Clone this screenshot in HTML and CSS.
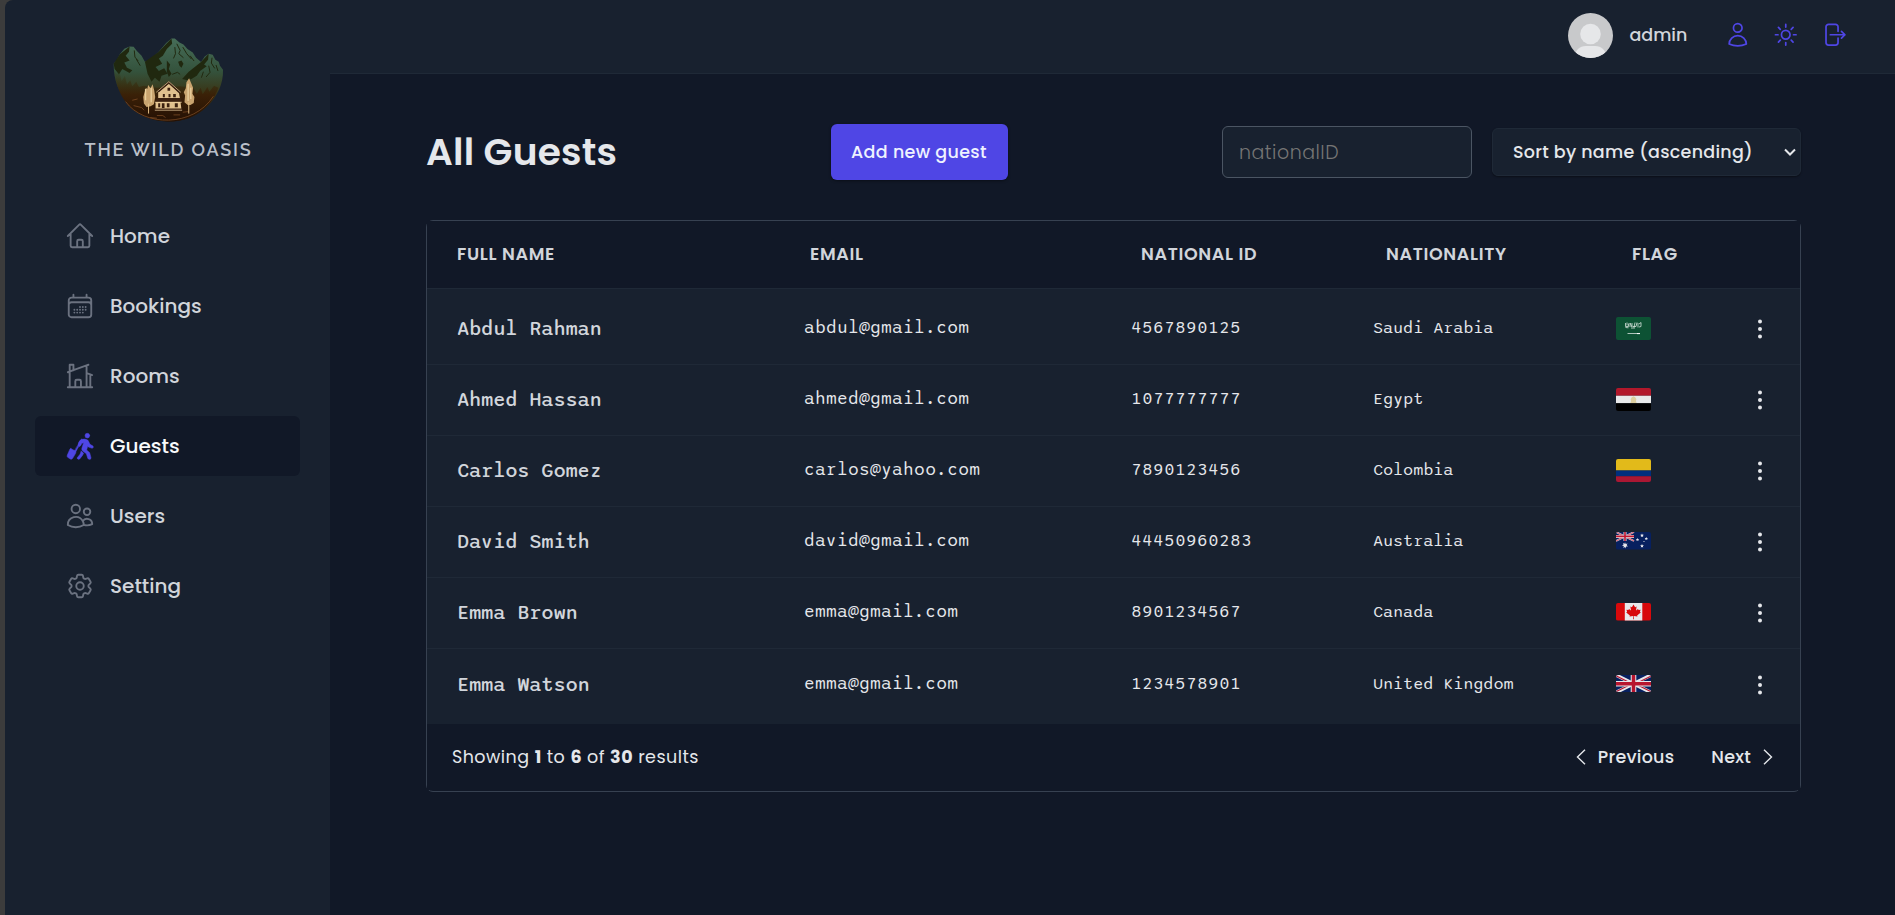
FILE: index.html
```html
<!DOCTYPE html>
<html lang="en">
<head>
<meta charset="utf-8">
<title>The Wild Oasis</title>
<link rel="stylesheet" href="styles.css">
</head>
<body>
<div class="app">
  <aside class="sidebar">
    <div class="brand">
      <svg class="brand-art" viewBox="338 110 334 258">
        <defs>
          <linearGradient id="hill" x1="0" y1="0" x2="0" y2="1"><stop offset="0" stop-color="#466d58"/><stop offset=".4" stop-color="#34523c"/><stop offset=".68" stop-color="#3a3212"/><stop offset="1" stop-color="#2a1606"/></linearGradient>
          <linearGradient id="ground" x1="0" y1="0" x2="0" y2="1"><stop offset="0" stop-color="#33360f" stop-opacity="0"/><stop offset=".5" stop-color="#3a1e06" stop-opacity=".9"/><stop offset="1" stop-color="#241104"/></linearGradient>
        </defs>
        <path fill="url(#hill)" d="M340 190 350 178 358 162 372 145 388 138 400 139 410 152 424 166 434 184 450 178 475 155 498 128 514 114 524 114 538 126 550 132 562 146 578 156 588 172 603 185 614 168 626 160 638 163 646 178 656 184 660 196 669 208C671 250 650 290 625 315C590 350 550 364 503 364C455 362 412 345 383 308C355 278 340 240 340 190Z"/>
        <path fill="#20280f" d="M340 190 358 162 388 138 386 154 376 166 388 180 372 186 380 202 396 210 388 218 366 206 356 222 343 206ZM434 184 475 155 514 114 516 130 500 146 488 166 476 174 486 190 466 200 476 212 492 204 502 220 484 226 478 244 464 232 454 244 442 220ZM603 185 626 160 624 178 612 192 620 198 600 212 590 226 574 236 562 240 546 236 566 214ZM534 184 544 180 550 190 544 202 538 196ZM500 180 510 192 506 206 514 220 506 230 500 214Z"/>
        <path fill="none" stroke="#20280f" stroke-width="3" d="M530 130 540 150 536 160 550 172M548 140 560 160 574 176M524 140 526 160 520 174M636 172 634 188 644 204M626 196 630 216 618 230M648 194 654 212M402 150 404 170 414 182M408 176 420 196M610 214 604 232M516 222 532 216 540 222M570 166 582 182"/>
        <path fill="url(#ground)" d="M341 205 350 222 356 208 364 242 374 226 380 252 390 240 396 258 408 244 416 260 430 256 470 262 540 258 580 262 590 280 602 262 608 282 622 260 628 274 642 256 655 262C642 300 600 364 503 364C400 358 350 300 341 205Z"/>
        <path fill="none" stroke="#8a552b" stroke-width="2" d="M376 304C430 380 580 382 640 288M396 300l16-4M400 316l24 6 8 8M470 346h18l8 6M520 344h20M548 336l18-2M450 352l20 2"/>
        <path fill="#c9a46f" d="M444 254l7 10 6-12 5 18 3 20-4 22-10 6-12 2-8-10-2-20 4-14 4-14 4 4ZM567 234l6 14 6 14-2 18 6 10-2 18-10 6h-8l-10-8 2-20-4-10 6-12 2-18Z"/>
        <path fill="none" stroke="#e9cf9c" stroke-width="4" d="M436 266v34M453 262v44M564 250v52M572 262v34"/>
        <path stroke="#e0bd86" stroke-width="3" d="M445 310v30M566 306v34"/>
        <path fill="#e0c08e" d="M506 250 536 276 540 296 544 328H466V306L474 294 474 276Z"/>
        <path fill="#3a2010" d="M506 250 476 276 470 272 506 243 542 274 536 278ZM472 293h68l6 12h-82ZM462 325h84v6h-84Z"/>
        <path fill="none" stroke="#f0d5a4" stroke-width="2" d="M468 276 506 244 542 276M464 306h81M464 330h82"/>
        <path fill="#3a2010" d="M502 262h8v9h-8ZM488 281h6v10h-6ZM505 281h6v10h-6ZM519 281h8v10h-8ZM474 309h6v12h-6ZM485 309h8v14h-8ZM500 309h8v12h-8ZM524 309h9v12h-9Z"/>
      </svg>
      <span class="brand-name">THE WILD OASIS</span>
    </div>
    <nav class="menu">
      <a class="item"><svg class="icon" viewBox="0 0 24 24"><path d="M2.25 12l8.954-8.955c.44-.439 1.152-.439 1.591 0L21.75 12M4.5 9.75v10.125c0 .621.504 1.125 1.125 1.125H9.75v-4.875c0-.621.504-1.125 1.125-1.125h2.25c.621 0 1.125.504 1.125 1.125V21h4.125c.621 0 1.125-.504 1.125-1.125V9.75M8.25 21h8.25"/></svg><span>Home</span></a>
      <a class="item"><svg class="icon" viewBox="0 0 24 24"><path d="M6.75 3v2.25M17.25 3v2.25M3 18.75V7.5a2.25 2.25 0 012.25-2.25h13.5A2.25 2.25 0 0121 7.5v11.25m-18 0A2.25 2.25 0 005.25 21h13.500A2.25 2.25 0 0021 18.75m-18 0v-7.5A2.25 2.25 0 015.25 9h13.500A2.25 2.25 0 0121 11.250v7.5m-9-6h.008v.008H12v-.008zM12 15h.008v.008H12V15zm0 2.250h.008v.008H12v-.008zM9.750 15h.008v.008H9.750V15zm0 2.250h.008v.008H9.750v-.008zM7.500 15h.008v.008H7.500V15zm0 2.250h.008v.008H7.500v-.008zm6.750-4.500h.008v.008h-.008v-.008zm0 2.250h.008v.008h-.008V15zm0 2.250h.008v.008h-.008v-.008zm2.250-4.500h.008v.008H16.500v-.008zm0 2.250h.008v.008H16.500V15z"/></svg><span>Bookings</span></a>
      <a class="item"><svg class="icon" viewBox="0 0 24 24"><path d="M8.25 21v-4.875c0-.621.504-1.125 1.125-1.125h2.25c.621 0 1.125.504 1.125 1.125V21m0 0h4.5V3.545M12.75 21h7.5V10.75M2.25 21h1.5m18 0h-18M2.25 9l4.5-1.636M18.75 3l-1.5.545m0 6.205l3 1m1.5.5l-1.5-.5M6.75 7.364V3h-3v18m3-13.636l10.5-3.819"/></svg><span>Rooms</span></a>
      <a class="item active"><svg class="icon walker" viewBox="195 722 90 90"><circle cx="262" cy="736" r="7"/><path d="M244 747Q256 744 264 750L270 762 279 767Q282 771 277 774L265 770 263 768 260 779 269 787 273 802Q273 808 268 807 264 807 263 803L259 790 247 781Q244 777 246 772L251 757 246 759 241 767Q236 772 233 767 235 752 244 747ZM244 782 251 789 247 796 239 806Q233 809 231 803L240 792ZM232 768 235 770 227 785 224 783ZM213 775 226 782Q229 785 227 789L218 804Q215 808 211 806L203 801Q200 798 202 794L209 778Q210 774 213 775Z"/></svg><span>Guests</span></a>
      <a class="item"><svg class="icon" viewBox="0 0 24 24"><path d="M15 19.128a9.38 9.38 0 002.625.372 9.337 9.337 0 004.121-.952 4.125 4.125 0 00-7.533-2.493M15 19.128v-.003c0-1.113-.285-2.16-.786-3.07M15 19.128v.106A12.318 12.318 0 018.624 21c-2.331 0-4.512-.645-6.374-1.766l-.001-.109a6.375 6.375 0 0111.964-3.07M12 6.375a3.375 3.375 0 11-6.75 0 3.375 3.375 0 016.75 0zm8.25 2.25a2.625 2.625 0 11-5.25 0 2.625 2.625 0 015.25 0z"/></svg><span>Users</span></a>
      <a class="item"><svg class="icon" viewBox="0 0 24 24"><path d="M9.594 3.94c.09-.542.56-.94 1.11-.94h2.593c.55 0 1.02.398 1.11.94l.213 1.281c.063.374.313.686.645.87.074.04.147.083.22.127.324.196.72.257 1.075.124l1.217-.456a1.125 1.125 0 011.37.49l1.296 2.247a1.125 1.125 0 01-.26 1.431l-1.003.827c-.293.24-.438.613-.431.992a6.759 6.759 0 010 .255c-.007.378.138.75.43.99l1.005.828c.424.35.534.954.26 1.43l-1.298 2.247a1.125 1.125 0 01-1.369.491l-1.217-.456c-.355-.133-.75-.072-1.076.124a6.57 6.57 0 01-.22.128c-.331.183-.581.495-.644.869l-.213 1.28c-.09.543-.56.941-1.11.941h-2.594c-.55 0-1.02-.398-1.11-.94l-.213-1.281c-.062-.374-.312-.686-.644-.87a6.52 6.52 0 01-.22-.127c-.325-.196-.72-.257-1.076-.124l-1.217.456a1.125 1.125 0 01-1.369-.49l-1.297-2.247a1.125 1.125 0 01.26-1.431l1.004-.827c.292-.24.437-.613.43-.992a6.932 6.932 0 010-.255c.007-.378-.138-.75-.43-.99l-1.004-.828a1.125 1.125 0 01-.26-1.43l1.297-2.247a1.125 1.125 0 011.37-.491l1.216.456c.356.133.751.072 1.076-.124.072-.044.146-.087.22-.128.332-.183.582-.495.644-.869l.214-1.281z"/><circle cx="12" cy="12" r="3"/></svg><span>Setting</span></a>
    </nav>
  </aside>
  <div class="page">
    <header class="topbar">
      <svg class="avatar" viewBox="0 0 45 45"><clipPath id="round"><circle cx="22.500" cy="22.500" r="22.500"/></clipPath><g clip-path="url(#round)"><path fill="#c8c9cb" d="M0 0h45v45H0z"/><circle cx="22.500" cy="21" r="10.300" fill="#e6e7e9"/><path fill="#e6e7e9" d="M6 45Q8 33 18 33H27Q37 33 39 45Z"/></g></svg>
      <span class="user-name">admin</span>
      <div class="actions">
        <svg class="action" viewBox="0 0 24 24"><path d="M15.75 6a3.75 3.75 0 11-7.5 0 3.75 3.75 0 017.5 0zM4.501 20.118a7.5 7.5 0 0114.998 0A17.933 17.933 0 0112 21.75c-2.676 0-5.216-.584-7.499-1.632z"/></svg>
        <svg class="action" viewBox="0 0 24 24"><path d="M12 3v2.25m6.364.386l-1.591 1.591M21 12h-2.25m-.386 6.364l-1.591-1.591M12 18.75V21m-4.773-4.227l-1.591 1.591M5.25 12H3m4.227-4.773L5.636 5.636M15.75 12a3.75 3.75 0 11-7.5 0 3.75 3.75 0 017.5 0z"/></svg>
        <svg class="action" viewBox="0 0 24 24"><path d="M15.75 9V5.25A2.25 2.25 0 0013.5 3h-6a2.25 2.25 0 00-2.25 2.25v13.5A2.25 2.25 0 007.500 21h6a2.25 2.25 0 002.25-2.25V15m3 0l3-3m0 0l-3-3m3 3H9"/></svg>
      </div>
    </header>
    <main class="content">
      <div class="toolbar">
        <h1 class="title">All Guests</h1>
        <button class="add">Add new guest</button>
        <div class="filters">
          <input class="search" type="text" placeholder="nationalID">
          <div class="sort"><span>Sort by name (ascending)</span><svg class="caret" viewBox="0 0 12 8"><path d="M1 1.500 6 6.500 11 1.500"/></svg></div>
        </div>
      </div>
      <section class="table">
        <div class="head"><span>FULL NAME</span><span>EMAIL</span><span>NATIONAL ID</span><span>NATIONALITY</span><span>FLAG</span></div>
        <div class="rows">
          <div class="row"><span class="name">Abdul Rahman</span><span class="email">abdul@gmail.com</span><span class="nid">4567890125</span><span class="nation">Saudi Arabia</span>
            <svg class="flag" viewBox="0 0 35 23"><path fill="#0d5234" d="M0 0h35v23H0z"/><path stroke="#d5e2dc" fill="none" stroke-width=".8" d="M11.500 16.500h12.500M9.500 6v3.500h3V6.500M11 5.500v3M14 10V6l2 4V6M17 9.500h3l1-4M19 5.500l-1 5M22 6v4.500M23 7l2-1.500v4l-2 .5M9.500 10.500l3 .3M15 11h4"/><path stroke="#fff" d="M21 16.600h3"/></svg>
            <svg class="dots" viewBox="0 0 6 22"><circle cx="3" cy="3.500" r="2"/><circle cx="3" cy="11" r="2"/><circle cx="3" cy="18.500" r="2"/></svg></div>
          <div class="row"><span class="name">Ahmed Hassan</span><span class="email">ahmed@gmail.com</span><span class="nid">1077777777</span><span class="nation">Egypt</span>
            <svg class="flag" viewBox="0 0 35 23"><path fill="#b2182b" d="M0 0h35v7.700H0z"/><path fill="#e8e9ea" d="M0 7.700h35v7.600H0z"/><path fill="#000" d="M0 15.300h35V23H0z"/><path fill="#ddcfa0" d="M17.500 8.300l1.700 1 1.200 2-.5 2 .8 1.700h-6.400l.8-1.700-.5-2 1.200-2z"/></svg>
            <svg class="dots" viewBox="0 0 6 22"><circle cx="3" cy="3.500" r="2"/><circle cx="3" cy="11" r="2"/><circle cx="3" cy="18.500" r="2"/></svg></div>
          <div class="row"><span class="name">Carlos Gomez</span><span class="email">carlos@yahoo.com</span><span class="nid">7890123456</span><span class="nation">Colombia</span>
            <svg class="flag" viewBox="0 0 35 23"><path fill="#e2ba1a" d="M0 0h35v11.500H0z"/><path fill="#002f7d" d="M0 11.500h35v5.700H0z"/><path fill="#aa1733" d="M0 17.200h35V23H0z"/></svg>
            <svg class="dots" viewBox="0 0 6 22"><circle cx="3" cy="3.500" r="2"/><circle cx="3" cy="11" r="2"/><circle cx="3" cy="18.500" r="2"/></svg></div>
          <div class="row"><span class="name">David Smith</span><span class="email">david@gmail.com</span><span class="nid">44450960283</span><span class="nation">Australia</span>
            <svg class="flag wide" viewBox="0 0 35 17.500"><path fill="#07205f" d="M0 0h35v17.500H0z"/><path stroke="#e6e6ea" stroke-width="1.800" d="M0 0l18 9M18 0L0 9"/><path stroke="#c1152f" stroke-width=".7" d="M0 0l18 9M18 0L0 9"/><path stroke="#e6e6ea" stroke-width="3" d="M9 0v9M0 4.400h18"/><path stroke="#c1152f" stroke-width="1.600" d="M9 0v9M0 4.400h18"/><path fill="#e6e6ea" d="M9 10.300l.7 1.700 1.900-.5-1 1.600 1.300 1.300-1.900.1-.2 1.900-.8-1.500-1.600 1 .4-1.800-1.800-.6 1.600-.9-.7-1.700 1.700.8zM26 1.500l.6 1.200h1.300l-1 1 .3 1.300-1.200-.6-1.200.6.3-1.300-1-1h1.300zM21.500 6l.5 1h1.100l-.8.9.3 1.200-1.100-.6-1.100.6.3-1.200-.8-.9h1.100zM30.300 5l.5 1h1.100l-.8.9.3 1.200-1.100-.6-1.100.6.3-1.200-.8-.9h1.100zM26 12l.6 1.200h1.300l-1 1 .3 1.300-1.200-.6-1.200.6.3-1.300-1-1h1.300z"/><circle cx="28" cy="9.500" r=".6" fill="#e6e6ea"/></svg>
            <svg class="dots" viewBox="0 0 6 22"><circle cx="3" cy="3.500" r="2"/><circle cx="3" cy="11" r="2"/><circle cx="3" cy="18.500" r="2"/></svg></div>
          <div class="row"><span class="name">Emma Brown</span><span class="email">emma@gmail.com</span><span class="nid">8901234567</span><span class="nation">Canada</span>
            <svg class="flag wide" viewBox="0 0 35 17.500"><path fill="#d8090b" d="M0 0h35v17.500H0z"/><path fill="#e8e8ea" d="M8.800 0h17.500v17.500H8.800z"/><path fill="#d8090b" d="M17.500 1.500l1.600 2.800 1.500-.7-.6 4 2-1.700.6 1.200 2-.3-.7 2 .9.600-3.700 3 .4 1.100-3.700-.4.100 3.200h-.8l.1-3.200-3.700.4.400-1.100-3.700-3 .9-.6-.7-2 2 .3.600-1.200 2 1.700-.6-4 1.500.7z"/></svg>
            <svg class="dots" viewBox="0 0 6 22"><circle cx="3" cy="3.500" r="2"/><circle cx="3" cy="11" r="2"/><circle cx="3" cy="18.500" r="2"/></svg></div>
          <div class="row"><span class="name">Emma Watson</span><span class="email">emma@gmail.com</span><span class="nid">1234578901</span><span class="nation">United Kingdom</span>
            <svg class="flag wide" viewBox="0 0 35 17.500"><path fill="#07205f" d="M0 0h35v17.500H0z"/><path stroke="#e6e6ea" stroke-width="3.400" d="M0 0l35 17.500M35 0L0 17.500"/><path stroke="#b8152f" stroke-width="1.100" d="M0 .8l17.500 8.700M35 16.700L17.500 8M35.500.8L17.500 9.800M0 16.700L17.500 8"/><path stroke="#e6e6ea" stroke-width="5.600" d="M17.500 0v17.500M0 8.750h35"/><path stroke="#b8152f" stroke-width="3.500" d="M17.500 0v17.500M0 8.750h35"/></svg>
            <svg class="dots" viewBox="0 0 6 22"><circle cx="3" cy="3.500" r="2"/><circle cx="3" cy="11" r="2"/><circle cx="3" cy="18.500" r="2"/></svg></div>
        </div>
        <footer class="foot">
          <p class="summary">Showing <b>1</b> to <b>6</b> of <b>30</b> results</p>
          <div class="pager">
            <span class="prev"><svg class="chev" viewBox="0 0 10 16"><path d="M9 .800 1.500 8 9 15.200"/></svg><span>Previous</span></span>
            <span class="next"><span>Next</span><svg class="chev" viewBox="0 0 10 16"><path d="M1 .800 8.500 8 1 15.200"/></svg></span>
          </div>
        </footer>
      </section>
    </main>
  </div>
</div>
</body>
</html>
```
FILE: styles.css
```css
* { box-sizing: border-box; margin: 0; padding: 0; }
body { background: #3c3c3c; font-family: Poppins, Inter, sans-serif; color: #e5e7eb; }
.app { display: flex; height: 915px; margin-left: 5px; background: #18212f; border-top-left-radius: 8px; overflow: hidden; }
svg { display: block; flex: none; }

.sidebar { width: 325px; flex: none; padding: 37px 30px 0; }
.brand { display: flex; flex-direction: column; align-items: center; height: 169px; }
.brand-art { width: 111px; height: 86px; margin-left: 2px; }
.brand-name { margin-top: 15px; font: 600 18px/24px Raleway, Lato, sans-serif; letter-spacing: 1.8px; margin-right: -2px; color: #b9bfc9; white-space: nowrap; }
.menu { display: flex; flex-direction: column; gap: 10px; }
.item { display: flex; align-items: center; gap: 15px; height: 60px; padding: 0 30px; border-radius: 6px; font-size: 20px; font-weight: 500; color: #d1d5db; }
.icon { width: 30px; height: 30px; fill: none; stroke: #6b7280; stroke-width: 1.5; stroke-linecap: round; stroke-linejoin: round; }
.active { background: #111827; color: #f9fafb; }
.walker { fill: #4f46e5; stroke: #4f46e5; stroke-width: 1.5; }

.page { flex: 1; display: flex; flex-direction: column; }
.topbar { height: 74px; padding: 0 47.5px 3px 0; display: flex; align-items: center; justify-content: flex-end; border-bottom: 1px solid #1f2937; }
.avatar { width: 45px; height: 45px; }
.user-name { margin-left: 16px; width: 57px; font-size: 17.5px; font-weight: 500; color: #d1d5db; }
.actions { display: flex; margin-left: 38px; gap: 20.3px; }
.action { width: 27.5px; height: 27.5px; fill: none; stroke: #4f46e5; stroke-width: 1.5; stroke-linecap: round; stroke-linejoin: round; }

.content { flex: 1; background: #111827; padding: 50px 94px 0 96px; }
.toolbar { display: flex; align-items: center; justify-content: space-between; height: 56px; }
.title { font-size: 37.5px; font-weight: 600; letter-spacing: .25px; width: 190px; white-space: nowrap; }
.add { width: 177px; height: 56px; border: 0; border-radius: 6px; background: #4f46e5; color: #eef2ff; font: 500 17.5px Poppins, Inter, sans-serif; letter-spacing: .33px; box-shadow: 0 1px 3px #0006; white-space: nowrap; }
.filters { display: flex; align-items: center; gap: 20px; }
.search { width: 250px; height: 52px; padding: 0 16px; background: #18212f; border: 1px solid #4b5563; border-radius: 6px; font: 300 19px Poppins, Inter, sans-serif; letter-spacing: .5px; }
.search::placeholder { color: #757575; }
.sort { display: flex; align-items: center; justify-content: space-between; width: 309px; height: 48px; padding: 0 4px 0 20px; background: #18212f; border: 1px solid #1f2937; border-radius: 6px; font-size: 17.5px; font-weight: 500; letter-spacing: .26px; box-shadow: 0 1px 2px #0006; white-space: nowrap; }
.caret { width: 12px; height: 8px; fill: none; stroke: #e5e7eb; stroke-width: 2; }

.table { margin-top: 40px; border: 1px solid #374151; border-radius: 7px; height: 572px; }
.head { display: grid; grid-template-columns: 353px 331px 245px 246px auto; padding: 0 0 2px 30px; height: 68px; align-items: center; background: #111827; border-bottom: 1px solid #1f2937; font-size: 17.5px; font-weight: 600; letter-spacing: .65px; color: #d1d5db; }
.rows { background: #18212f; padding: 5px 0 4px; }
.row { display: grid; grid-template-columns: 347px 328px 241px 243px 141px auto; padding-left: 30px; height: 71px; align-items: center; border-bottom: 1px solid #1f2937; font-family: Sono, "Liberation Mono", monospace; white-space: nowrap; }
.row:last-child { border-bottom: 0; }
.name { font-size: 20px; font-weight: 500; letter-spacing: -.33px; color: #d1d5db; }
.email { font-size: 17.5px; letter-spacing: .18px; padding-bottom: 3px; }
.nid { font-size: 17.5px; letter-spacing: .18px; padding-bottom: 3px; margin-left: -1px; }
.nation { font-size: 16.5px; letter-spacing: -.18px; padding-bottom: 2px; }
.flag { width: 35px; height: 23px; margin-bottom: 2px; border-radius: 2px; }
.wide { height: 17.5px; }
.dots { width: 6px; height: 22px; fill: #e5e7eb; }

.foot { display: flex; justify-content: space-between; align-items: center; height: 66px; padding: 0 27px 0 25px; background: #111827; font-size: 17.5px; }
.summary { letter-spacing: .45px; }
.pager { display: flex; gap: 37px; font-weight: 500; letter-spacing: .25px; }
.prev, .next { display: flex; align-items: center; gap: 12px; }
.chev { width: 10px; height: 16px; fill: none; stroke: #e5e7eb; stroke-width: 1.4; }
```
